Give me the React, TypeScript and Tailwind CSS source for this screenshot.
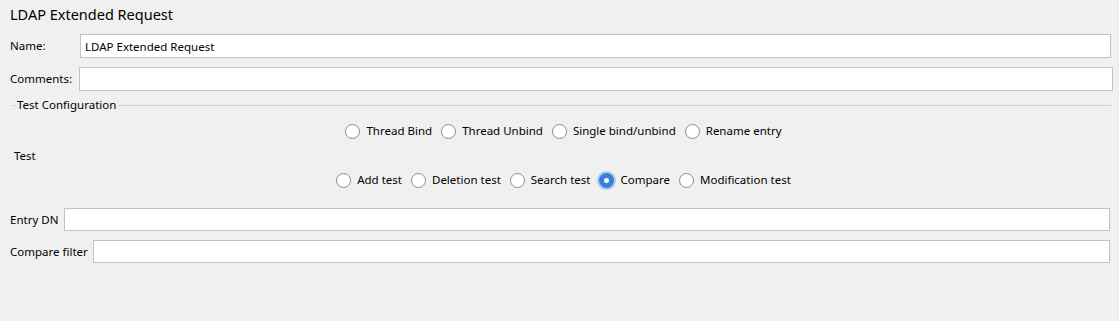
import { useState } from "react";

const font = { fontFamily: '"Noto Sans", "Open Sans", sans-serif' };

const topOptions = ["Thread Bind", "Thread Unbind", "Single bind/unbind", "Rename entry"];
const testOptions = ["Add test", "Deletion test", "Search test", "Compare", "Modification test"];

const Radio = ({ label, checked, onClick }: { label: string; checked: boolean; onClick: () => void }) => (
  <button type="button" onClick={onClick} className="flex items-center gap-[6px] cursor-default">
    {checked ? (
      <span className="w-[15px] h-[15px] rounded-full bg-[#3c7fd6] flex items-center justify-center shadow-[0_0_0_2px_#a9cdf4]">
        <span className="w-[5px] h-[5px] rounded-full bg-white" />
      </span>
    ) : (
      <span className="w-[15px] h-[15px] rounded-full bg-white border border-[#8a8a8a]" />
    )}
    <span className="text-[11.5px] text-black leading-[16px]">{label}</span>
  </button>
);

const FieldRow = ({
  label,
  value,
  labelWidth,
  rightPad,
  height,
}: {
  label: string;
  value?: string;
  labelWidth: string;
  rightPad: string;
  height: string;
}) => (
  <div className={`flex items-center pl-[10px] ${rightPad}`}>
    <span className={`${labelWidth} shrink-0 text-[11.5px] text-black`}>{label}</span>
    <input
      defaultValue={value}
      className={`flex-1 ${height} bg-white border border-[#c3c3c3] px-[5px] text-[11.5px] text-black outline-none`}
      style={font}
    />
  </div>
);

export default function App() {
  const [mode, setMode] = useState<string | null>(null);
  const [test, setTest] = useState("Compare");

  return (
    <div className="w-full h-[321px] bg-[#f0f0f0] text-black overflow-hidden" style={font}>
      <div className="pl-[10px] pt-[3px] h-[34px] text-[14.5px] leading-[22px]">LDAP Extended Request</div>

      <div className="flex items-center pl-[10px] pr-[8px]">
        <span className="w-[70px] shrink-0 text-[11.5px]">Name:</span>
        <input
          defaultValue="LDAP Extended Request"
          className="flex-1 h-[24px] bg-white border border-[#c3c3c3] px-[4px] text-[11.5px] text-black outline-none"
          style={font}
        />
      </div>

      <div className="mt-[9px]">
        <FieldRow label="Comments:" labelWidth="w-[69px]" rightPad="pr-[6px]" height="h-[24px]" />
      </div>

      <div className="mt-[6px] flex items-center pl-[12px] pr-[8px] h-[16px]">
        <span className="w-[3px] h-px bg-[#d0d0d0]" />
        <span className="px-[2px] text-[11.5px] leading-[16px]">Test Configuration</span>
        <span className="flex-1 h-px bg-[#d0d0d0]" />
      </div>

      <div className="mt-[6px] flex justify-center gap-[9px] pl-[8px] h-[24px] items-center">
        {topOptions.map((o) => (
          <Radio key={o} label={o} checked={mode === o} onClick={() => setMode(o)} />
        ))}
      </div>

      <div className="pl-[14px] mt-[4px] h-[18px] text-[11.5px] leading-[18px]">Test</div>

      <div className="mt-[3px] flex justify-center gap-[9px] pl-[8px] h-[24px] items-center">
        {testOptions.map((o) => (
          <Radio key={o} label={o} checked={test === o} onClick={() => setTest(o)} />
        ))}
      </div>

      <div className="mt-[16px]">
        <FieldRow label="Entry DN" labelWidth="w-[54px]" rightPad="pr-[9px]" height="h-[23px]" />
      </div>

      <div className="mt-[9px]">
        <FieldRow label="Compare filter" labelWidth="w-[83px]" rightPad="pr-[9px]" height="h-[23px]" />
      </div>
    </div>
  );
}
